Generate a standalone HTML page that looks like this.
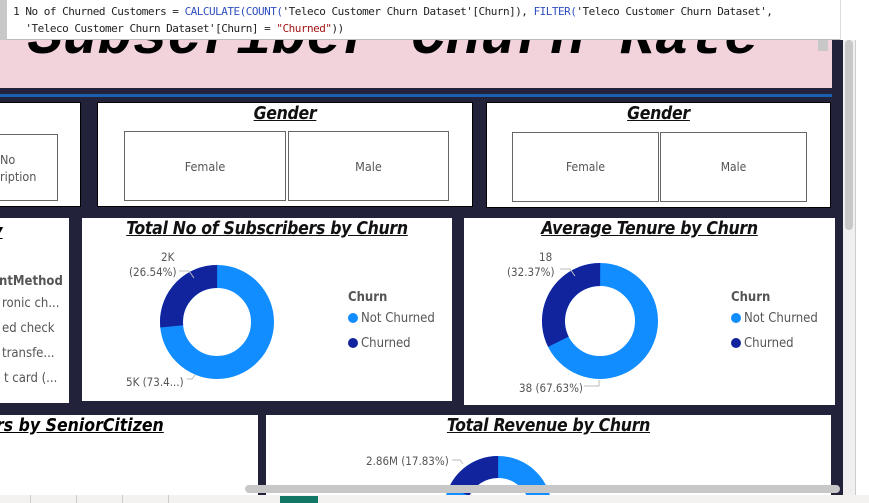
<!DOCTYPE html><html><head><style>
html,body{margin:0;width:869px;height:503px;overflow:hidden}
body{position:relative;background:#22223a;font-family:"DejaVu Sans Condensed","Liberation Sans",sans-serif}
.a{position:absolute}
.card{position:absolute;background:#fff;border:1px solid #000;box-sizing:border-box}
.t{position:absolute;left:0;right:0;text-align:center;font-weight:bold;font-style:italic;text-decoration:underline;font-size:17.5px;color:#111;font-family:"DejaVu Sans Condensed",sans-serif;letter-spacing:-0.3px}
.btn{position:absolute;border:1px solid #666;box-sizing:border-box;display:flex;align-items:center;justify-content:center;font-size:12.5px;color:#555;font-family:"DejaVu Sans Condensed","Liberation Sans",sans-serif;background:#fff}
.lg{position:absolute;font-size:13px;color:#555;font-family:"DejaVu Sans Condensed","Liberation Sans",sans-serif}
.dot{display:inline-block;width:10px;height:10px;border-radius:50%;margin-right:3px;vertical-align:-1px}
.lab{position:absolute;font-size:11.5px;color:#555;font-family:"DejaVu Sans Condensed",sans-serif}
</style></head><body>
<div class="a" style="left:0;top:40px;width:832px;height:48px;background:#f2d3dc"></div>
<div class="a" style="left:28px;top:6px;font-family:'Liberation Mono',monospace;font-weight:bold;font-style:italic;font-size:58px;line-height:66px;color:#000;white-space:nowrap">Subscriber Churn Rate</div>
<div class="a" style="left:0;top:94px;width:832px;height:3px;background:#1a5fb0"></div>
<div class="a" style="left:0;top:0;width:7px;height:40px;background:#c8c8c8"></div>
<div class="a" style="left:7px;top:0;width:833px;height:39px;background:#fff;border-bottom:1px solid #bbb;overflow:hidden;font-family:'DejaVu Sans Mono',monospace;font-size:11px;line-height:17px;color:#222;white-space:pre;letter-spacing:-0.5px"><div style="padding-top:3px"> 1 No of Churned Customers = <span style="color:#3050c0">CALCULATE(COUNT(</span>'Teleco Customer Churn Dataset'[Churn]), <span style="color:#3050c0">FILTER(</span>'Teleco Customer Churn Dataset',
   'Teleco Customer Churn Dataset'[Churn] = <span style="color:#a31515">"Churned"</span>))</div></div>
<div class="a" style="left:818px;top:40px;width:10px;height:11px;background:#c8c8c8"></div>
<div class="a" style="left:840px;top:0;width:29px;height:40px;background:#fff;border-left:1px solid #ddd"></div>
<div class="a" style="left:843px;top:40px;width:12px;height:455px;background:#f0f0f0"></div>
<div class="a" style="left:845px;top:40px;width:8px;height:190px;background:#c8c8c8;border-radius:4px"></div>
<div class="a" style="left:855px;top:40px;width:14px;height:455px;background:#fff;border-left:1px solid #ccc"></div>

<div class="card" style="left:-2px;top:102px;width:83px;height:105px"><div class="btn" style="left:0;top:31px;width:59px;height:67px;justify-content:flex-start;line-height:17px">No<br>ription</div></div>
<div class="card" style="left:97px;top:102px;width:376px;height:105px"><div class="t" style="top:1px">Gender</div>
<div class="btn" style="left:26px;top:28px;width:162px;height:70px">Female</div><div class="btn" style="left:190px;top:28px;width:161px;height:70px">Male</div></div>
<div class="card" style="left:486px;top:102px;width:345px;height:106px"><div class="t" style="top:1px">Gender</div>
<div class="btn" style="left:25px;top:29px;width:147px;height:70px;font-size:12px">Female</div><div class="btn" style="left:173px;top:29px;width:147px;height:70px;font-size:12px">Male</div></div>

<div class="a" style="left:0;top:218px;width:69px;height:185px;background:#fff;overflow:hidden">
<div class="a" style="left:-8px;top:3px;font-weight:bold;font-style:italic;text-decoration:underline;font-size:18px">y</div>
<div class="lg" style="left:-1px;top:56px;font-weight:bold">ntMethod</div>
<div class="lg" style="left:2px;top:78px">ronic ch...</div>
<div class="lg" style="left:2px;top:103px">ed check</div>
<div class="lg" style="left:2px;top:128px">transfe...</div>
<div class="lg" style="left:4px;top:153px">t card (...</div></div>

<div class="a" style="left:82px;top:218px;width:370px;height:183px;background:#fff"><div class="t" style="top:1px">Total No of Subscribers by Churn</div>
<svg class="a" style="left:0;top:0" width="370" height="183"><circle cx="135" cy="104" r="45.5" fill="none" stroke="#118dff" stroke-width="23"/><circle cx="135" cy="104" r="45.5" fill="none" stroke="#12239e" stroke-width="23" stroke-dasharray="75.9 300" transform="rotate(-185.5 135 104)"/><path d="M97 53 h10 l5 7 M105 161 h5 l3 -4" stroke="#bbb" fill="none"/></svg>
<div class="lab" style="left:79px;top:32px">2K</div><div class="lab" style="left:47px;top:47px">(26.54%)</div><div class="lab" style="left:44px;top:157px">5K (73.4...)</div>
<div class="lg" style="left:266px;top:72px;font-weight:bold">Churn</div>
<div class="lg" style="left:266px;top:93px"><span class="dot" style="background:#118dff"></span>Not Churned</div>
<div class="lg" style="left:266px;top:118px"><span class="dot" style="background:#12239e"></span>Churned</div></div>

<div class="a" style="left:464px;top:218px;width:371px;height:187px;background:#fff"><div class="t" style="top:1px">Average Tenure by Churn</div>
<svg class="a" style="left:0;top:0" width="371" height="187"><circle cx="136" cy="103" r="46.5" fill="none" stroke="#118dff" stroke-width="23"/><circle cx="136" cy="103" r="46.5" fill="none" stroke="#12239e" stroke-width="23" stroke-dasharray="94.6 300" transform="rotate(-206.5 136 103)"/><path d="M96 51 h10 l5 7 M120 168 h15 v-6" stroke="#bbb" fill="none"/></svg>
<div class="lab" style="left:75px;top:32px">18</div><div class="lab" style="left:43px;top:47px">(32.37%)</div><div class="lab" style="left:55px;top:163px">38 (67.63%)</div>
<div class="lg" style="left:267px;top:72px;font-weight:bold">Churn</div>
<div class="lg" style="left:267px;top:93px"><span class="dot" style="background:#118dff"></span>Not Churned</div>
<div class="lg" style="left:267px;top:118px"><span class="dot" style="background:#12239e"></span>Churned</div></div>

<div class="a" style="left:0;top:415px;width:258px;height:80px;background:#fff;overflow:hidden"><div class="a" style="left:-4px;top:1px;font-weight:bold;font-style:italic;text-decoration:underline;font-size:17.5px;white-space:nowrap">rs by SeniorCitizen</div></div>
<div class="a" style="left:266px;top:415px;width:565px;height:80px;background:#fff;overflow:hidden"><div class="t" style="top:1px">Total Revenue by Churn</div>
<svg class="a" style="left:0;top:0" width="565" height="80"><circle cx="232" cy="95" r="43" fill="none" stroke="#118dff" stroke-width="22"/><circle cx="232" cy="95" r="43" fill="none" stroke="#12239e" stroke-width="22" stroke-dasharray="48.2 300" transform="rotate(-154.2 232 95)"/><path d="M186 45 h8 l3 4" stroke="#bbb" fill="none"/></svg>
<div class="lab" style="left:100px;top:39px">2.86M (17.83%)</div></div>

<div class="a" style="left:245px;top:485px;width:595px;height:8px;background:#c8c8c8;border-radius:4px"></div>
<div class="a" style="left:0;top:495px;width:869px;height:8px;background:#f3f2f1"></div>
<div class="a" style="left:30px;top:495px;width:1px;height:8px;background:#ccc"></div>
<div class="a" style="left:76px;top:495px;width:1px;height:8px;background:#ccc"></div>
<div class="a" style="left:122px;top:495px;width:1px;height:8px;background:#ccc"></div>
<div class="a" style="left:168px;top:495px;width:1px;height:8px;background:#ccc"></div>
<div class="a" style="left:280px;top:496px;width:38px;height:7px;background:#117865"></div>
</body></html>
